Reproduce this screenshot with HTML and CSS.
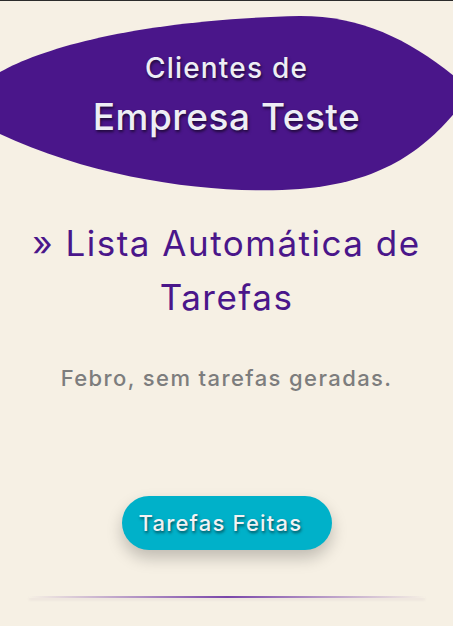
FILE: index.html
```html
<!DOCTYPE html>
<html lang="pt">
<head>
<meta charset="utf-8">
<title>Clientes de Empresa Teste</title>
<link rel="stylesheet" href="styles.css">
</head>
<body>
<header class="hero">
  <p class="hero-small">Clientes de</p>
  <h1 class="hero-big">Empresa Teste</h1>
</header>
<main class="content">
  <h2 class="title">» Lista Automática de Tarefas</h2>
  <p class="empty">Febro, sem tarefas geradas.</p>
  <button class="btn" type="button">Tarefas Feitas</button>
  <div class="divider"></div>
</main>
</body>
</html>
```

FILE: styles.css
```css
html, body {
  margin: 0;
  padding: 0;
}
body {
  background: #f6f0e4;
  border-top: 1px solid #2b2b2b;
  font-family: "Inter", "Open Sans", sans-serif;
  width: 453px;
  height: 625px;
  overflow: hidden;
}
.hero {
  height: 200px;
  background: #4a168a;
  clip-path: path("M0,71 C45,46 140,19 300,15 C370,15 420,45 472,90 C440,132 400,180 300,188 C220,194 100,180 0,133 Z");
  display: flex;
  flex-direction: column;
  align-items: center;
  padding-top: 50px;
  box-sizing: border-box;
}
.hero-small {
  margin: 0;
  color: #eeeef5;
  font-size: 28px;
  font-weight: 500;
  line-height: 34px;
  letter-spacing: 1.2px;
  text-shadow: 1px 2px 3px rgba(0,0,0,0.6);
}
.hero-big {
  margin: 10px 0 0;
  color: #eeeef5;
  font-size: 37px;
  font-weight: 500;
  line-height: 44px;
  letter-spacing: 0.5px;
  text-shadow: 1px 2px 3px rgba(0,0,0,0.6);
}
.content {
  display: flex;
  flex-direction: column;
  align-items: center;
}
.title {
  margin: 15px 16px 0;
  color: #4a168a;
  font-size: 35px;
  font-weight: 400;
  line-height: 54px;
  letter-spacing: 1.5px;
  text-align: center;
}
.empty {
  margin: 39px 0 0;
  color: #7d7d7d;
  font-size: 22px;
  font-weight: 500;
  line-height: 30px;
  letter-spacing: 1.4px;
}
.btn {
  margin-top: 103px;
  width: 210px;
  height: 54px;
  border: none;
  border-radius: 27px;
  background: #00b1c9;
  color: #f2f2f4;
  font-family: inherit;
  font-size: 22px;
  font-weight: 500;
  letter-spacing: 1.2px;
  text-align: left;
  padding: 0 0 0 17px;
  text-shadow: 1px 2px 3px rgba(0,0,0,0.55);
  box-shadow: 0 8px 16px rgba(0,0,0,0.22);
}
.divider {
  margin-top: 46px;
  width: 396px;
  height: 2px;
  background: linear-gradient(90deg, rgba(122,70,170,0) 0%, #7a46aa 50%, rgba(122,70,170,0) 100%);
  box-shadow: 0 2px 3px rgba(80,40,120,0.08);
}
```
